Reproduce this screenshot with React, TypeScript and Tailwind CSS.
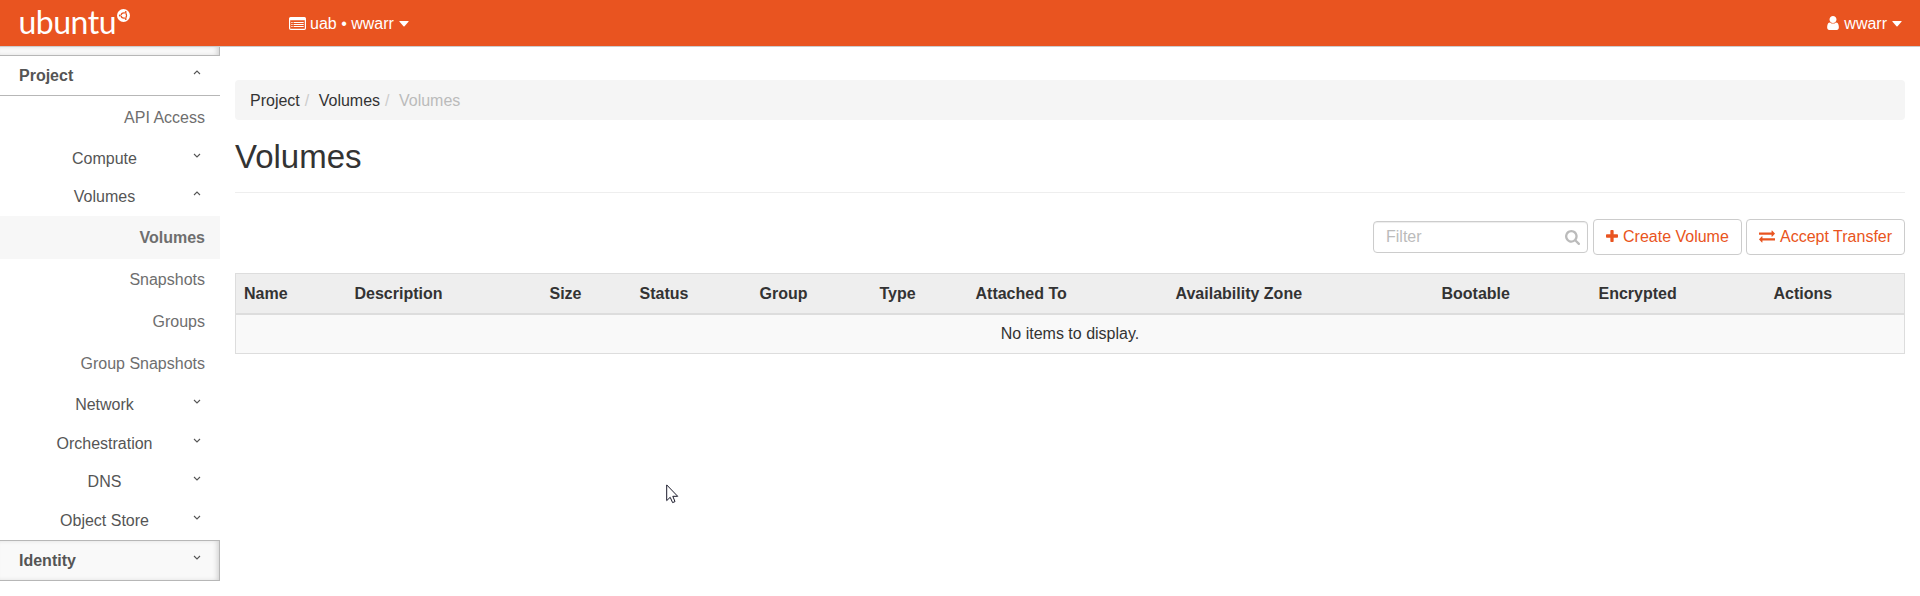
import React from "react";

const COLUMNS = [
  { label: "Name", width: "w-[111px]" },
  { label: "Description", width: "w-[195px]" },
  { label: "Size", width: "w-[90px]" },
  { label: "Status", width: "w-[120px]" },
  { label: "Group", width: "w-[120px]" },
  { label: "Type", width: "w-[96px]" },
  { label: "Attached To", width: "w-[200px]" },
  { label: "Availability Zone", width: "w-[266px]" },
  { label: "Bootable", width: "w-[157px]" },
  { label: "Encrypted", width: "w-[175px]" },
  { label: "Actions", width: "" },
];

function Glyph({ d, className, viewBox = "0 0 1792 1792" }: { d: string; className: string; viewBox?: string }) {
  return (
    <svg viewBox={viewBox} className={className} fill="currentColor" aria-hidden="true">
      <path d={d} />
    </svg>
  );
}

const USER =
  "M1536 1399q0 109-62.5 187t-150.5 78h-854q-88 0-150.5-78t-62.5-187q0-85 8.5-160.5t31.5-152 58.5-131 94-89 134.5-34.5q131 128 313 128t313-128q76 0 134.5 34.5t94 89 58.5 131 31.5 152 8.5 160.5zm-256-887q0 159-112.5 271.5t-271.5 112.5-271.5-112.5-112.5-271.5 112.5-271.5 271.5-112.5 271.5 112.5 112.5 271.5z";
const SEARCH =
  "M1216 832q0-185-131.5-316.5t-316.5-131.5-316.5 131.5-131.5 316.5 131.5 316.5 316.5 131.5 316.5-131.5 131.5-316.5zm512 832q0 52-38 90t-90 38q-54 0-90-38l-343-342q-179 124-399 124-143 0-273.5-55.5t-225-150-150-225-55.5-273.5 55.5-273.5 150-225 225-150 273.5-55.5 273.5 55.5 225 150 150 225 55.5 273.5q0 220-124 399l343 343q37 37 37 90z";
const PLUS =
  "M1600 736v192q0 40-28 68t-68 28h-416v416q0 40-28 68t-68 28h-192q-40 0-68-28t-28-68v-416h-416q-40 0-68-28t-28-68v-192q0-40 28-68t68-28h416v-416q0-40 28-68t68-28h192q40 0 68 28t28 68v416h416q40 0 68 28t28 68z";
const EXCHANGE =
  "M1792 1184v192q0 13-9.5 22.5t-22.5 9.5h-1376v192q0 13-9.5 22.5t-22.5 9.5q-12 0-24-10l-319-320q-9-9-9-22 0-14 9-23l320-320q9-9 23-9 13 0 22.5 9.5t9.5 22.5v192h1376q13 0 22.5 9.5t9.5 22.5zm0-544q0 14-9 23l-320 320q-9 9-23 9-13 0-22.5-9.5t-9.5-22.5v-192h-1376q-13 0-22.5-9.5t-9.5-22.5v-192q0-13 9.5-22.5t22.5-9.5h1376v-192q0-14 9-23t23-9q12 0 24 10l319 319q9 9 9 23z";

function ListAltIcon() {
  return (
    <svg viewBox="0 0 17 13" className="h-[13px] w-[17px]" aria-hidden="true">
      <rect x="0.6" y="0.6" width="15.8" height="11.8" rx="1.2" fill="none" stroke="#fff" strokeWidth="1.2" />
      <rect x="0.5" y="0.5" width="16" height="2.8" rx="0.8" fill="#fff" />
      <path d="M2.3 5.5h1.3M2.3 7.5h1.3M2.3 9.5h1.3M4.6 5.5h10.1M4.6 7.5h10.1M4.6 9.5h10.1" stroke="#fff" />
    </svg>
  );
}

function Caret() {
  return (
    <svg viewBox="0 0 10 6" className="mt-[1px] h-[6px] w-[10px]" aria-hidden="true">
      <path d="M0.8 0h8.4q0.8 0 0.3 0.8L5.5 5.2q-0.5 0.5-1 0L0.5 0.8Q0 0 0.8 0z" fill="#fff" />
    </svg>
  );
}

function Chevron({ up = false }: { up?: boolean }) {
  return (
    <svg viewBox="0 0 8 5" className="mb-[6px] h-[5px] w-[8px]" fill="none" stroke="#555" strokeWidth="1.1" aria-hidden="true">
      <path d={up ? "M1 4L4 1L7 4" : "M1 1L4 4L7 1"} />
    </svg>
  );
}

function Group({ label, height, open }: { label: string; height: string; open?: boolean }) {
  return (
    <div className={`flex items-center pr-[19px] text-[#555] ${height}`}>
      <span className="ml-[16px] w-[177px] text-center">{label}</span>
      <Chevron up={open} />
    </div>
  );
}

function Item({ label, height, active }: { label: string; height: string; active?: boolean }) {
  return (
    <div className={`flex items-center justify-end pr-[15px] text-[#6e6e6e] ${height} ${active ? "bg-[#f7f7f7] font-bold" : ""}`}>
      {label}
    </div>
  );
}

function Header() {
  return (
    <header className="flex h-[47px] items-start border-b border-[#ccc] bg-[#e95420] text-white">
      <div className="flex h-[46px] w-[269px] pl-[18px]">
        <span className="h-[46px] w-[99px] pl-[0.5px] font-['Lato'] text-[32px] leading-[43px] tracking-[-0.5px]">ubuntu</span>
        <svg viewBox="0 0 14 14" className="mt-[9px] h-[13px] w-[13px]" aria-hidden="true">
          <circle cx="7" cy="7" r="7" fill="#fff" />
          <circle cx="7.4" cy="7" r="2.9" fill="none" stroke="#e95420" strokeWidth="1.3" />
          <path d="M7.4 7L2.5 7M7.4 7L9.8 2.9M7.4 7L9.8 11.1" stroke="#fff" strokeWidth="0.7" />
          <circle cx="3" cy="7" r="1" fill="#e95420" />
          <circle cx="9.4" cy="3.2" r="1" fill="#e95420" />
          <circle cx="9.4" cy="10.8" r="1" fill="#e95420" />
        </svg>
      </div>
      <div className="flex h-[46px] items-center pl-[20px]">
        <ListAltIcon />
        <span className="mr-[5px] ml-[4px]">uab • wwarr</span>
        <Caret />
      </div>
      <div className="ml-auto flex h-[46px] items-center pr-[18px]">
        <Glyph d={USER} viewBox="256 128 1280 1536" className="h-[14px] w-[12px]" />
        <span className="mr-[5px] ml-[5px]">wwarr</span>
        <Caret />
      </div>
    </header>
  );
}

function Sidebar() {
  return (
    <nav className="flex w-[220px] flex-col">
      <div className="h-[9px] border-r border-b border-[#b7b7b7] bg-[#f9f9f9] shadow-[inset_-3px_0_5px_-1px_rgba(0,0,0,0.15)]" />
      <div className="flex h-[40px] items-center justify-between border-b border-[#b7b7b7] pr-[19px] pl-[19px] font-bold text-[#555]">
        Project
        <Chevron up />
      </div>
      <Item label="API Access" height="h-[43px]" />
      <Group label="Compute" height="h-[38px]" />
      <Group label="Volumes" height="h-[39px] pb-[1px]" open />
      <Item label="Volumes" height="h-[43px]" active />
      <Item label="Snapshots" height="h-[41px]" />
      <Item label="Groups" height="h-[42px]" />
      <Item label="Group Snapshots" height="h-[42px]" />
      <Group label="Network" height="h-[40px]" />
      <Group label="Orchestration" height="h-[39px]" />
      <Group label="DNS" height="h-[38px] pb-[2px]" />
      <Group label="Object Store" height="h-[39px]" />
      <div className="flex h-[41px] items-center justify-between border-y border-r border-[#b7b7b7] bg-[#f9f9f9] pr-[18px] pl-[19px] font-bold text-[#555] shadow-[inset_-3px_0_5px_-1px_rgba(0,0,0,0.15)]">
        Identity
        <Chevron />
      </div>
    </nav>
  );
}

function Toolbar() {
  return (
    <div className="mt-[26px] flex h-[36px] items-center justify-end">
      <div className="mr-[5px] flex h-[32px] w-[215px] items-center justify-between rounded-[4px] border border-[#ccc] pr-[7px] pl-[12px] text-[#bbb] shadow-[inset_0_1px_1px_rgba(0,0,0,0.075)]">
        <span className="pb-[2px]">Filter</span>
        <Glyph d={SEARCH} viewBox="64 128 1664 1664" className="mt-[1px] h-[15px] w-[15px]" />
      </div>
      <button className="mr-[4px] flex h-[36px] w-[149px] items-center rounded-[4px] border border-[#ccc] bg-white pb-[2px] pl-[12px] whitespace-nowrap text-[#e95420]">
        <Glyph d={PLUS} viewBox="192 128 1408 1408" className="mr-[5px] h-[12px] w-[12px]" />
        Create Volume
      </button>
      <button className="flex h-[36px] w-[159px] items-center rounded-[4px] border border-[#ccc] bg-white pb-[2px] pl-[12px] whitespace-nowrap text-[#e95420]">
        <Glyph d={EXCHANGE} viewBox="0 256 1792 1408" className="mt-[1px] mr-[5px] h-[13px] w-[16px]" />
        Accept Transfer
      </button>
    </div>
  );
}

export default function App() {
  return (
    <div className="relative h-[596px] w-[1920px] overflow-hidden bg-white font-['Liberation_Sans',Arial,sans-serif] text-[16px] leading-[23px] text-[#333]">
      <Header />
      <div className="flex">
        <Sidebar />
        <main className="w-[1685px] pt-[33px] pl-[15px]">
          <ol className="flex h-[40px] items-center rounded-[4px] bg-[#f5f5f5] pl-[15px]">
            <li>Project</li>
            <li className="px-[5px] whitespace-pre text-[#ccc]">{"/ "}</li>
            <li>Volumes</li>
            <li className="px-[5px] whitespace-pre text-[#ccc]">{"/ "}</li>
            <li className="text-[#bbb]">Volumes</li>
          </ol>
          <h1 className="h-[73px] border-b border-[#eee] pt-[19px] text-[33px] leading-[36px]">Volumes</h1>
          <Toolbar />
          <table className="mt-[18px] w-[1670px] table-fixed border-collapse border border-[#ddd]">
            <thead>
              <tr className="h-[40px] border-b-2 border-[#ddd] bg-[#eee]">
                {COLUMNS.map((c) => (
                  <th key={c.label} className={`pl-[8px] text-left font-bold whitespace-nowrap ${c.width}`}>
                    {c.label}
                  </th>
                ))}
              </tr>
            </thead>
            <tbody>
              <tr className="h-[40px] bg-[#f9f9f9]">
                <td colSpan={11} className="text-center">
                  No items to display.
                </td>
              </tr>
            </tbody>
          </table>
        </main>
      </div>
      <svg viewBox="0 0 13 21" className="absolute top-[484px] left-[666px] h-[21px] w-[13px]" aria-hidden="true">
        <path d="M0.7 0.9V16.6L4.2 13.3L6.6 18.6L9 17.6L6.8 12.3H11.7Z" fill="#fff" stroke="#1a1a2a" strokeWidth="1" />
      </svg>
    </div>
  );
}
